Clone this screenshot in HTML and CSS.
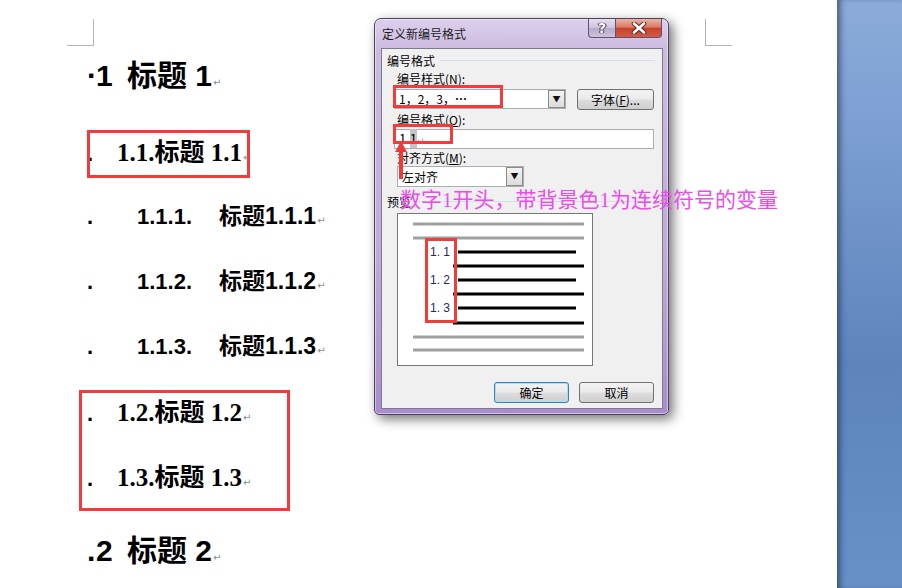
FILE: index.html
```html
<!DOCTYPE html>
<html lang="zh-CN">
<head>
  <meta charset="UTF-8">
  <title>定义新编号格式</title>
  <link rel="stylesheet" href="styles.css">
</head>
<body>
<div class="screen">

  <!-- 文档页面 -->
  <div class="page">
    <div class="corners">
      <span class="corner c-left"></span>
      <span class="corner c-right"></span>
    </div>

    <div class="doc">
      <div class="row lv1 first"><span class="mark mid">·</span><span class="num">1</span><span class="txt">标题 1</span><span class="ret">↵</span></div>
      <div class="row lv2 after1"><span class="mark">.</span><span class="txt">1.1.标题 1.1</span><span class="ret">↵</span></div>
      <div class="row lv3 after2"><span class="mark">.</span><span class="num">1.1.1.</span><span class="txt">标题1.1.1</span><span class="ret">↵</span></div>
      <div class="row lv3"><span class="mark">.</span><span class="num">1.1.2.</span><span class="txt">标题1.1.2</span><span class="ret">↵</span></div>
      <div class="row lv3"><span class="mark">.</span><span class="num">1.1.3.</span><span class="txt">标题1.1.3</span><span class="ret">↵</span></div>
      <div class="row lv2 after3"><span class="mark">.</span><span class="txt">1.2.标题 1.2</span><span class="ret">↵</span></div>
      <div class="row lv2"><span class="mark">.</span><span class="txt">1.3.标题 1.3</span><span class="ret">↵</span></div>
      <div class="row lv1 last"><span class="mark">.</span><span class="num">2</span><span class="txt">标题 2</span><span class="ret">↵</span></div>
    </div>
  </div>

  <div class="pane"></div>

  <!-- 对话框 -->
  <div class="dialog">
    <div class="titlebar">
      <span class="title">定义新编号格式</span>
      <div class="caption-btns">
        <span class="cbtn help">?</span>
        <span class="cbtn close">
          <svg width="16" height="12" viewBox="0 0 16 12">
            <path d="M3 1.5 L13 10.5 M13 1.5 L3 10.5" stroke="#5a2a24" stroke-width="4.6" stroke-linecap="round"/>
            <path d="M3 1.5 L13 10.5 M13 1.5 L3 10.5" stroke="#fff" stroke-width="2.6" stroke-linecap="round"/>
          </svg>
        </span>
      </div>
    </div>

    <div class="client">
      <div class="group">
        <span>编号格式</span>
        <span class="rule"></span>
      </div>

      <div class="label">编号样式(<u>N</u>):</div>
      <div class="line-row">
        <div class="combo wide">
          <span class="value">1，2，3，<b class="dots">⋯</b></span>
          <span class="drop">▼</span>
        </div>
        <span class="btn font-btn">字体(<u>F</u>)...</span>
      </div>

      <div class="label">编号格式(<u>O</u>):</div>
      <div class="input">1.<span class="sel">1</span><span class="ret-s">↵</span></div>

      <div class="label">对齐方式(<u>M</u>):</div>
      <div class="combo narrow">
        <span class="value">左对齐</span>
        <span class="drop">▼</span>
      </div>

      <div class="group preview-title">
        <span>预览</span>
        <span class="rule"></span>
      </div>

      <div class="preview">
        <svg width="194" height="151" viewBox="0 0 194 151">
          <g stroke="#a0a0a0" stroke-width="3">
            <line x1="15" y1="10" x2="186" y2="10"/>
            <line x1="15" y1="24" x2="186" y2="24"/>
            <line x1="15" y1="123" x2="186" y2="123"/>
            <line x1="15" y1="136" x2="186" y2="136"/>
          </g>
          <g stroke="#000" stroke-width="3">
            <line x1="60" y1="38" x2="178" y2="38"/>
            <line x1="55" y1="52" x2="186" y2="52"/>
            <line x1="60" y1="66" x2="178" y2="66"/>
            <line x1="55" y1="80" x2="186" y2="80"/>
            <line x1="60" y1="94" x2="178" y2="94"/>
            <line x1="55" y1="109" x2="186" y2="109"/>
          </g>
          <g class="pv-num">
            <text x="32" y="42">1. 1</text>
            <text x="32" y="70">1. 2</text>
            <text x="32" y="98">1. 3</text>
          </g>
        </svg>
      </div>

      <div class="actions">
        <span class="btn default">确定</span>
        <span class="btn">取消</span>
      </div>
    </div>
  </div>

  <!-- 标注 -->
  <span class="mark-box box-a"></span>
  <span class="mark-box box-b"></span>
  <span class="mark-box box-c"></span>
  <span class="mark-box box-d"></span>
  <span class="mark-box box-e"></span>

  <svg class="arrow" width="14" height="40" viewBox="0 0 14 40">
    <path d="M7 0 L13 11 L9 11 L9 38 L5 38 L5 11 L1 11 Z" fill="#f03a3a"/>
  </svg>

  <div class="note">数字1开头，带背景色1为连续符号的变量</div>
</div>
</body>
</html>
```

FILE: styles.css
```css
html, body {
  margin: 0;
  padding: 0;
}
body {
  width: 902px;
  height: 588px;
  overflow: hidden;
  font-family: "Noto Sans CJK SC", sans-serif;
}

.screen {
  position: relative;
  display: flex;
  height: 588px;
}

/* ---------- 页面 ---------- */
.page {
  width: 837px;
  background: #fff;
  padding-top: 19px;
  box-sizing: border-box;
}
.pane {
  flex: 1;
  background: linear-gradient(to bottom, #8cabda 0%, #7c9ed1 22%, #5d84bd 62%, #6891c8 100%);
  box-shadow: inset 6px 0 6px -3px rgba(20, 35, 70, 0.6);
}

.corners {
  display: flex;
  justify-content: space-between;
  margin: 0 105px 0 67px;
}
.corner {
  width: 26px;
  height: 26px;
  border-bottom: 1px solid #b4b4b4;
}
.c-left { border-right: 1px solid #b4b4b4; }
.c-right { border-left: 1px solid #b4b4b4; }

.doc {
  padding-left: 87px;
}
.row {
  white-space: nowrap;
  font-weight: bold;
  color: #000;
}
.row span {
  display: inline-block;
}
.ret {
  font-family: "DejaVu Sans", sans-serif;
  font-weight: normal;
  font-size: 10px;
  color: #8c8c8c;
  margin-left: 1px;
}

.lv1 {
  height: 40px;
  line-height: 40px;
  font-size: 30px;
  font-family: "Liberation Sans", "Noto Sans CJK SC", sans-serif;
}
.lv1 .mark { width: 9px; }
.lv1 .num { width: 31px; }

.lv2 {
  height: 40px;
  line-height: 40px;
  font-size: 25px;
  font-family: "Liberation Serif", "Noto Sans CJK SC", serif;
}
.lv2 .mark {
  width: 30px;
  font-family: "Liberation Sans", sans-serif;
  font-size: 22px;
}

.lv3 {
  height: 36px;
  line-height: 36px;
  font-size: 22px;
  font-family: "Liberation Sans", "Noto Sans CJK SC", sans-serif;
  margin-top: 29px;
}
.lv3 .mark { width: 50px; }
.lv3 .num { width: 82px; }
.lv3 .txt { font-size: 23px; }

.first { margin-top: 10px; }
.after1 { margin-top: 37px; }
.after2 { margin-top: 25px; }
.after3 { margin-top: 29px; }
.lv2 + .lv2 { margin-top: 25px; }
.last { margin-top: 33px; }

/* ---------- 对话框 ---------- */
.dialog {
  position: absolute;
  left: 374px;
  top: 18px;
  width: 295px;
  height: 397px;
  box-sizing: border-box;
  border: 1px solid #4e4260;
  border-radius: 7px 7px 5px 5px;
  padding: 0 5px 5px 6px;
  background: linear-gradient(to bottom, #dccfec 0%, #cbbbe0 8%, #bfaad9 60%, #a98ccb 100%);
  box-shadow: 4px 4px 12px rgba(0, 0, 0, 0.55), inset 0 0 0 1px rgba(255, 255, 255, 0.45);
  font-size: 12px;
  color: #000;
}

.titlebar {
  height: 29px;
  display: flex;
  justify-content: space-between;
}
.title {
  line-height: 29px;
  padding-left: 1px;
  color: #1c1c1c;
}
.caption-btns {
  display: flex;
  margin-right: 1px;
}
.cbtn {
  height: 19px;
  box-sizing: border-box;
  border: 1px solid #5e5274;
  border-top: none;
  display: flex;
  align-items: center;
  justify-content: center;
}
.help {
  width: 27px;
  border-radius: 0 0 0 4px;
  border-right: none;
  background: linear-gradient(to bottom, #e6dfee 0%, #cfc4de 48%, #b8aacb 52%, #cdc2db 100%);
  color: #fff;
  font-family: "DejaVu Sans", sans-serif;
  font-weight: bold;
  font-size: 14px;
  text-shadow: 0 0 1px #3c3450, 0 0 1px #3c3450, 1px 0 0 #3c3450, -1px 0 0 #3c3450;
}
.close {
  width: 47px;
  border-radius: 0 0 4px 0;
  background: linear-gradient(to bottom, #eab3a6 0%, #dc7a66 45%, #c7412b 52%, #d45a44 100%);
}

.client {
  height: 361px;
  box-sizing: border-box;
  border: 1px solid #7d7b8c;
  background: #f0f0f0;
  padding: 0 7px 0 5px;
  display: flex;
  flex-direction: column;
}

.group {
  display: flex;
  align-items: center;
  height: 22px;
}
.group .rule {
  flex: 1;
  height: 1px;
  margin-left: 5px;
  background: #d5dfe5;
}
.preview-title {
  height: 20px;
  margin-top: 4px;
}

.label {
  height: 16px;
  line-height: 16px;
  padding-left: 10px;
}
.label:first-of-type { height: 15px; }

.line-row {
  display: flex;
  align-items: flex-start;
  gap: 11px;
  margin-top: 2px;
  margin-bottom: 2px;
  padding-left: 7px;
}

.combo {
  display: flex;
  height: 20px;
  box-sizing: border-box;
  border: 1px solid #abadb3;
  background: #fff;
}
.combo .value {
  flex: 1;
  line-height: 18px;
  padding-left: 4px;
}
.dots {
  font-weight: bold;
  letter-spacing: -1px;
}
.combo .drop {
  width: 17px;
  box-sizing: border-box;
  border: 1px solid #8a8a8a;
  background: linear-gradient(to bottom, #f4f4f4, #dcdcdc);
  font-size: 8px;
  line-height: 16px;
  text-align: center;
  color: #111;
}
.wide { width: 172px; }
.narrow {
  width: 127px;
  height: 21px;
  margin-left: 10px;
}
.narrow .value { line-height: 19px; }

.input {
  width: 260px;
  height: 20px;
  box-sizing: border-box;
  margin: 1px 0 1px 7px;
  border: 1px solid #abadb3;
  background: #fff;
  line-height: 18px;
  padding-left: 4px;
  font-size: 13px;
}
.input .sel { background: #c4c4c4; }
.ret-s {
  font-family: "DejaVu Sans", sans-serif;
  font-size: 9px;
  color: #888;
}

.btn {
  display: inline-block;
  height: 21px;
  box-sizing: border-box;
  border: 1px solid #707070;
  border-radius: 3px;
  background: linear-gradient(to bottom, #f2f2f2 0%, #ebebeb 48%, #dddddd 52%, #cfcfcf 100%);
  line-height: 19px;
  text-align: center;
  width: 75px;
}
.font-btn { width: 77px; }
.btn.default {
  border-color: #3c7fb1;
  box-shadow: inset 0 0 0 1px #a6e0f6;
}

.preview {
  width: 196px;
  height: 153px;
  box-sizing: border-box;
  margin: 2px 0 0 10px;
  border: 1px solid #767676;
  background: #fff;
}
.preview svg { display: block; }
.pv-num {
  font-family: "Liberation Sans", sans-serif;
  font-size: 12px;
  fill: #1f2a5c;
}

.actions {
  display: flex;
  justify-content: flex-end;
  gap: 10px;
  margin-top: 16px;
  padding-right: 1px;
}

/* ---------- 标注 ---------- */
.mark-box {
  position: absolute;
  box-sizing: border-box;
  border: 3px solid #f23c3c;
}
.box-a { left: 87px; top: 130px; width: 163px; height: 48px; }
.box-b { left: 79px; top: 390px; width: 211px; height: 121px; }
.box-c { left: 393px; top: 85px; width: 110px; height: 23px; }
.box-d { left: 393px; top: 124px; width: 60px; height: 20px; }
.box-e { left: 425px; top: 238px; width: 32px; height: 85px; }

.arrow {
  position: absolute;
  left: 394px;
  top: 141px;
}

.note {
  position: absolute;
  left: 400px;
  top: 187px;
  font-family: "Liberation Serif", "Noto Sans CJK SC", serif;
  font-size: 21px;
  line-height: 26px;
  color: #ec4cec;
  white-space: nowrap;
}
```
